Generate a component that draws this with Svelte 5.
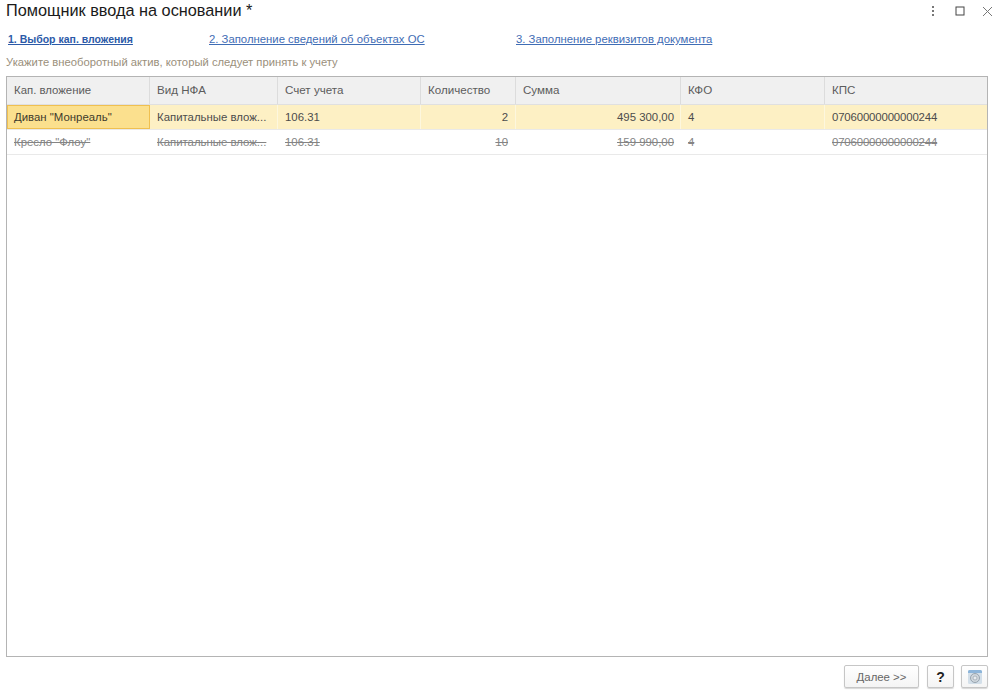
<script>
  const cols = [
    { t: 'Кап. вложение', w: 143 },
    { t: 'Вид НФА', w: 128 },
    { t: 'Счет учета', w: 143 },
    { t: 'Количество', w: 95 },
    { t: 'Сумма', w: 165 },
    { t: 'КФО', w: 144 },
    { t: 'КПС', w: 162 }
  ];
  const rows = [
    ['Диван "Монреаль"', 'Капитальные влож...', '106.31', '2', '495 300,00', '4', '07060000000000244'],
    ['Кресло "Флоу"', 'Капитальные влож...', '106.31', '10', '159 990,00', '4', '07060000000000244']
  ];
  const right = [false, false, false, true, true, false, false];
</script>

<div class="page">
  <header class="head">
    <h1>Помощник ввода на основании *</h1>
    <div class="wins">
      <svg width="4" height="12" viewBox="0 0 4 12"><g fill="#777"><rect x="1" y="1" width="2" height="2"/><rect x="1" y="5" width="2" height="2"/><rect x="1" y="9" width="2" height="2"/></g></svg>
      <svg class="max" width="10" height="10" viewBox="0 0 10 10"><rect x="1" y="1" width="8" height="8" fill="none" stroke="#444" stroke-width="1"/></svg>
      <svg class="cls" width="11" height="11" viewBox="0 0 11 11"><path d="M1 1l9 9M10 1l-9 9" stroke="#777" stroke-width="1" fill="none"/></svg>
    </div>
  </header>

  <nav class="steps">
    <a class="active s1" href="#a">1. Выбор кап. вложения</a>
    <a class="s2" href="#b">2. Заполнение сведений об объектах ОС</a>
    <a href="#c">3. Заполнение реквизитов документа</a>
  </nav>

  <p class="hint">Укажите внеоборотный актив, который следует принять к учету</p>

  <section class="table">
    <div class="row hdr">
      {#each cols as c}
        <div class="cell" style="width:{c.w}px">{c.t}</div>
      {/each}
    </div>
    {#each rows as r, i}
      <div class="row" class:sel={i === 0} class:del={i === 1}>
        {#each r as v, j}
          <div class="cell" class:right={right[j]} class:cur={i === 0 && j === 0} class:code={j === 6} class:sum={j === 4} style="width:{cols[j].w}px"><span>{v}</span></div>
        {/each}
      </div>
    {/each}
  </section>

  <footer class="foot">
    <button class="next">Далее &gt;&gt;</button>
    <button class="sq q">?</button>
    <button class="sq cam" aria-label="Настройки">
      <svg width="16" height="16" viewBox="0 0 16 16">
        <rect x="1" y="1" width="14" height="14" rx="1.5" fill="#d3dfe9"/>
        <path d="M1 4V2.5A1.5 1.5 0 0 1 2.5 1h11A1.5 1.5 0 0 1 15 2.5V4z" fill="#8db5da"/>
        <circle cx="8" cy="9" r="4.5" fill="#cfd6dc" stroke="#98a4af"/>
        <circle cx="8" cy="9" r="2" fill="#e8ecef" stroke="#98a4af" stroke-width=".7"/>
      </svg>
    </button>
  </footer>
</div>

<style>
  :global(body) { margin: 0; background: #fff; }
  .page {
    width: 1000px;
    height: 695px;
    box-sizing: border-box;
    padding: 0 12px 0 6px;
    display: flex;
    flex-direction: column;
    font-family: "Liberation Sans", Arial, sans-serif;
    font-size: 11.4px;
    color: #4a4a4a;
    overflow: hidden;
  }
  .head { height: 20px; margin-bottom: 2px; display: flex; align-items: center; justify-content: space-between; flex: none; }
  h1 { margin: 0; font-size: 16.3px; font-weight: 400; color: #1a1a1a; line-height: 20px; }
  .wins { display: flex; align-items: center; margin-right: -5px; margin-top: 2px; }
  .max { margin-left: 20px; }
  .cls { margin-left: 17px; }
  .steps { display: flex; height: 18px; margin-top: 8px; align-items: center; flex: none; padding-left: 2px; font-size: 11.34px; }
  .steps a { color: #3f6db5; text-decoration: underline; white-space: nowrap; }
  .s1 { width: 201px; }
  .s2 { width: 307px; }
  .steps .active { font-weight: 700; font-size: 10.5px; color: #2c5aa8; }
  .hint { margin: 6px 0 0; height: 16px; line-height: 16px; color: #9a8f7b; flex: none; font-size: 11.26px; }
  .table {
    margin-top: 6px;
    flex: none;
    height: 581px;
    box-sizing: border-box;
    border: 1px solid #b4b4b4;
    overflow: hidden;
  }
  .row { display: flex; height: 25px; box-sizing: border-box; border-bottom: 1px solid #e9e9e9; }
  .cell {
    flex: none;
    box-sizing: border-box;
    padding: 0 7px;
    line-height: 24px;
    white-space: nowrap;
    overflow: hidden;
    border-right: 1px solid transparent;
    color: #4c4c4c;
  }
  .cell:last-child { border-right: 0; }
  .right { text-align: right; }
  .sum { padding-right: 6px; }
  .code { letter-spacing: -0.15px; }
  .hdr { height: 28px; background: #f0f0f0; border-bottom: 1px solid #e0e0e0; }
  .hdr .cell { line-height: 26px; border-right-color: #dcdcdc; color: #5c5c5c; font-size: 11.6px; }
  .hdr .cell:first-child { font-size: 11.4px; }
  .sel { background: #fdf0c4; }
  .sel .cell { border-right-color: #fdf7de; }
  .sel .cur {
    background: #fbe08e;
    border: 1px solid #f0c050;
    line-height: 22px;
    padding: 0 6px;
    height: 24px;
    color: #3e3a2c;
  }
  .del .cell span { text-decoration: line-through; color: #848484; }
  .foot { flex: none; display: flex; justify-content: flex-end; margin-top: 8px; }
  button {
    box-sizing: border-box;
    height: 23px;
    background: linear-gradient(#fff, #f4f4f4);
    border: 1px solid #c6c6c6;
    border-radius: 2px;
    box-shadow: 0 1px 1px #d8d8d8;
    font-family: inherit;
    font-size: 11.4px;
    color: #666;
    padding: 0;
  }
  .next { width: 75px; }
  .sq { width: 27px; margin-left: 8px; display: flex; align-items: center; justify-content: center; }
  .q { font-weight: 700; font-size: 14px; color: #222; }
  .cam { margin-left: 7px; }
</style>
